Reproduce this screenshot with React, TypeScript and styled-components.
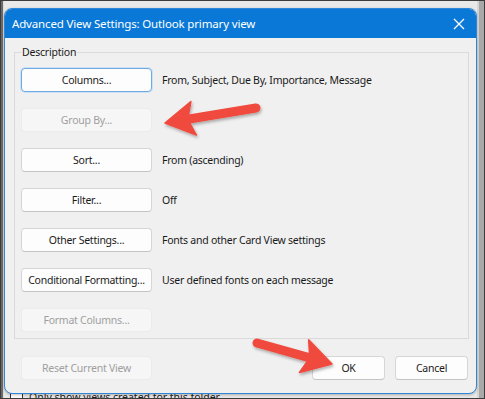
import React from "react";
import styled, { createGlobalStyle, css } from "styled-components";

const Global = createGlobalStyle`
  html, body { margin: 0; padding: 0; background: #e8e8e8; }
  body { width: 485px; height: 399px; overflow: hidden; }
  * { box-sizing: border-box; }
`;

const FONT = `"Segoe UI", "Noto Sans", "Open Sans", sans-serif`;

const Frame = styled.div`
  position: relative;
  width: 485px;
  height: 399px;
  overflow: hidden;
  border: 1px solid #3c3c3c;
  padding: 7px 0 0 3px;
  background:
    linear-gradient(to right, #6a6a6a 0, #6a6a6a 2px, #dcdcdc 2px, #dcdcdc 3px, transparent 3px),
    linear-gradient(to left, #a9a9a9 0, #a9a9a9 5px, #d6d6d6 5px, #d6d6d6 7px, transparent 7px),
    #e9e9e9;
  font-family: ${FONT};
`;

const BehindRow = styled.div`
  position: absolute;
  left: 9px;
  top: 389px;
  display: flex;
  align-items: center;
  gap: 6px;
  font-size: 10.5px;
  color: #222;
`;

const BehindBox = styled.span`
  width: 13px;
  height: 13px;
  border: 1px solid #333;
  border-radius: 2px;
  background: #fff;
`;

const Dialog = styled.div`
  position: relative;
  z-index: 1;
  width: 473px;
  height: 386px;
  border: 1px solid #2f86d6;
  border-radius: 8px;
  overflow: hidden;
  background: #f0f0f0;
  display: flex;
  flex-direction: column;
  box-shadow: 0 1px 3px rgba(0, 0, 0, 0.25);
`;

const TitleBar = styled.div`
  height: 29px;
  flex: none;
  background: #0a78d6;
  color: #fff;
  display: flex;
  align-items: center;
  justify-content: space-between;
  padding: 0 10px 0 7px;
  font-size: 11.5px;
  letter-spacing: -0.15px;
`;

const Close = styled.span`
  display: flex;
  width: 14px;
  height: 14px;
`;

const Body = styled.div`
  flex: 1;
  display: flex;
  flex-direction: column;
  padding: 6px 7px 0 9px;
`;

const Group = styled.fieldset`
  margin: 0;
  padding: 8px 6px 6px 6px;
  border: 1px solid #dadada;
  border-radius: 0;
  display: flex;
  flex-direction: column;
  gap: 16px;
`;

const Legend = styled.legend`
  padding: 0 1px;
  margin-left: 0;
  font-size: 10.5px;
  letter-spacing: -0.2px;
  line-height: 16px;
  color: #1a1a1a;
`;

const Row = styled.div`
  display: flex;
  align-items: center;
  gap: 10px;
  height: 24px;
`;

const Button = styled.button<{ $disabled?: boolean; $focused?: boolean; $width?: number }>`
  flex: none;
  width: ${(p) => p.$width ?? 131}px;
  height: 24px;
  padding: 0;
  font-family: ${FONT};
  font-size: 10.5px;
  letter-spacing: -0.25px;
  white-space: nowrap;
  color: #1b1b1b;
  background: #fdfdfd;
  border: 1px solid #d6d6d6;
  border-bottom-color: #c4c4c4;
  border-radius: 4px;
  ${(p) =>
    p.$focused &&
    css`
      border-color: #6fa9e3;
      box-shadow: 0 0 0 1px #cfe2f5;
    `}
  ${(p) =>
    p.$disabled &&
    css`
      background: #f6f6f6;
      color: #9f9f9f;
      border-color: #ebebeb;
    `}
`;

const Label = styled.span`
  font-size: 10.5px;
  letter-spacing: -0.25px;
  color: #1a1a1a;
  white-space: nowrap;
`;

const Footer = styled.div`
  display: flex;
  align-items: center;
  gap: 10px;
  margin-top: 17px;
  padding: 0 1px 0 7px;
`;

const Spacer = styled.div`
  flex: 1;
`;

const Overlay = styled.svg`
  position: absolute;
  left: 0;
  top: 0;
  z-index: 2;
  pointer-events: none;
  overflow: visible;
`;

const rows: { label: string; text?: string; disabled?: boolean; focused?: boolean }[] = [
  { label: "Columns...", text: "From, Subject, Due By, Importance, Message", focused: true },
  { label: "Group By...", disabled: true },
  { label: "Sort...", text: "From (ascending)" },
  { label: "Filter...", text: "Off" },
  { label: "Other Settings...", text: "Fonts and other Card View settings" },
  { label: "Conditional Formatting...", text: "User defined fonts on each message" },
  { label: "Format Columns...", disabled: true },
];

function Arrow({ tail, tip }: { tail: [number, number]; tip: [number, number] }) {
  const dx = tip[0] - tail[0];
  const dy = tip[1] - tail[1];
  const len = Math.hypot(dx, dy);
  const ux = dx / len;
  const uy = dy / len;
  const nx = -uy;
  const ny = ux;
  const hl = 29;
  const hw = 17;
  const bx = tip[0] - hl * ux;
  const by = tip[1] - hl * uy;
  const notchX = tip[0] - 23 * ux;
  const notchY = tip[1] - 23 * uy;
  const p1 = `${bx + hw * nx},${by + hw * ny}`;
  const p2 = `${bx - hw * nx},${by - hw * ny}`;
  return (
    <g filter="url(#shadow)">
      <line
        x1={tail[0]}
        y1={tail[1]}
        x2={notchX}
        y2={notchY}
        stroke="#f0493d"
        strokeWidth={9}
        strokeLinecap="round"
      />
      <polygon
        points={`${tip[0]},${tip[1]} ${p1} ${notchX},${notchY} ${p2}`}
        fill="#f0493d"
        stroke="#f0493d"
        strokeWidth={1.5}
        strokeLinejoin="round"
      />
    </g>
  );
}

export default function App() {
  return (
    <>
      <Global />
      <Frame>
        <BehindRow>
          <BehindBox />
          Only show views created for this folder
        </BehindRow>
        <Dialog>
          <TitleBar>
            <span>Advanced View Settings: Outlook primary view</span>
            <Close>
              <svg width="14" height="14" viewBox="0 0 14 14">
                <path d="M2 2 L12 12 M12 2 L2 12" stroke="#fff" strokeWidth="1.3" />
              </svg>
            </Close>
          </TitleBar>
          <Body>
            <Group>
              <Legend>Description</Legend>
              {rows.map((r) => (
                <Row key={r.label}>
                  <Button $disabled={r.disabled} $focused={r.focused}>
                    {r.label}
                  </Button>
                  {r.text && <Label>{r.text}</Label>}
                </Row>
              ))}
            </Group>
            <Footer>
              <Button $disabled>Reset Current View</Button>
              <Spacer />
              <Button $width={73}>OK</Button>
              <Button $width={73}>Cancel</Button>
            </Footer>
          </Body>
        </Dialog>
        <Overlay width="485" height="399">
          <defs>
            <filter id="shadow" x="-20%" y="-40%" width="140%" height="180%">
              <feDropShadow dx="1" dy="2" stdDeviation="1.5" floodColor="#000" floodOpacity="0.3" />
            </filter>
          </defs>
          <Arrow tail={[255, 107]} tip={[164, 122]} />
          <Arrow tail={[256, 342]} tip={[331, 363]} />
        </Overlay>
      </Frame>
    </>
  );
}
